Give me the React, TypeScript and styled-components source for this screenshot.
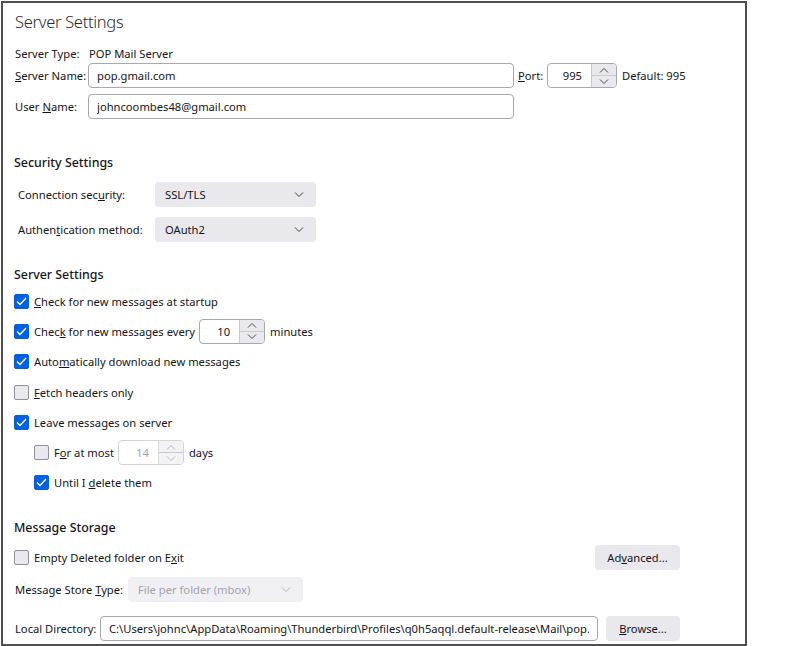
import React from "react";
import styled, { createGlobalStyle } from "styled-components";

const GlobalStyle = createGlobalStyle`
  body {
    margin: 0;
    background: #fff;
    font-family: "Noto Sans", "Open Sans", sans-serif;
    font-size: 11.2px;
    color: #15141a;
  }
`;

const Window = styled.div`
  box-sizing: border-box;
  width: 746px;
  height: 645px;
  margin: 1px 0 0 1px;
  border: 2px solid #4f4f4f;
  background: #fff;
  padding: 7px 0 0 12px;
  overflow: hidden;
`;

const Title = styled.h1`
  margin: 0;
  font-size: 16.5px;
  line-height: 24px;
  font-weight: 300;
  letter-spacing: -0.3px;
  color: #2b2a33;
`;

const Heading = styled.h2<{ $top: number }>`
  margin: ${({ $top }) => $top}px 0 0 -1px;
  font-size: 12.4px;
  line-height: 18px;
  font-weight: 500;
  color: #15141a;
`;

const Row = styled.div<{ $top?: number; $height?: number }>`
  display: flex;
  align-items: center;
  margin-top: ${({ $top = 0 }) => $top}px;
  height: ${({ $height = 25 }) => $height}px;
`;

const SplitRow = styled(Row)`
  width: 665px;
  justify-content: space-between;
`;

const Label = styled.span<{ $width?: number; $indent?: number }>`
  flex: none;
  width: ${({ $width }) => ($width ? `${$width}px` : "auto")};
  margin-left: ${({ $indent = 0 }) => $indent}px;
  white-space: nowrap;
`;

const Note = styled.span<{ $gap?: number }>`
  margin-left: ${({ $gap = 0 }) => $gap}px;
  white-space: nowrap;
`;

const TextField = styled.input<{ $width: number }>`
  box-sizing: border-box;
  width: ${({ $width }) => $width}px;
  height: 25px;
  margin: 0;
  padding: 0 8px;
  border: 1px solid #a8a8b0;
  border-radius: 4px;
  background: #fff;
  font: inherit;
  color: #15141a;
  outline: none;
`;

const Select = styled.div<{ $width: number; $disabled?: boolean }>`
  box-sizing: border-box;
  display: flex;
  align-items: center;
  justify-content: space-between;
  width: ${({ $width }) => $width}px;
  height: 25px;
  padding: 0 12px 0 10px;
  border-radius: 4px;
  background: ${({ $disabled }) => ($disabled ? "#f0f0f4" : "#e9e9ed")};
  color: ${({ $disabled }) => ($disabled ? "#a3a3a8" : "#15141a")};
`;

const Button = styled.button<{ $width: number }>`
  box-sizing: border-box;
  width: ${({ $width }) => $width}px;
  height: 25px;
  margin: 0;
  padding: 0;
  border: none;
  border-radius: 4px;
  background: #e9e9ed;
  font: inherit;
  color: #15141a;
`;

const Spin = styled.div<{ $width: number; $disabled?: boolean }>`
  box-sizing: border-box;
  display: flex;
  width: ${({ $width }) => $width}px;
  height: 25px;
  border: 1px solid ${({ $disabled }) => ($disabled ? "#d4d4d8" : "#a8a8b0")};
  border-radius: 4px;
  color: ${({ $disabled }) => ($disabled ? "#a3a3a8" : "#15141a")};
`;

const SpinValue = styled.span`
  flex: 1;
  align-self: center;
  text-align: right;
  padding-right: 9px;
`;

const SpinButtons = styled.div<{ $disabled?: boolean }>`
  display: flex;
  flex-direction: column;
  width: 24px;
  background: ${({ $disabled }) => ($disabled ? "#f3f3f5" : "#e9e9ed")};
  border-left: 1px solid ${({ $disabled }) => ($disabled ? "#dcdce0" : "#c9c9cf")};
  border-radius: 0 3px 3px 0;
`;

const SpinHalf = styled.div<{ $top?: boolean }>`
  flex: 1;
  display: flex;
  align-items: center;
  justify-content: center;
  border-top: ${({ $top }) => ($top ? "none" : "1px solid #c9c9cf")};
`;

const CheckRow = styled.label<{ $indent?: number }>`
  display: flex;
  align-items: center;
  height: 30.3px;
  padding-left: ${({ $indent = 0 }) => $indent}px;
`;

const Box = styled.span<{ $checked: boolean }>`
  box-sizing: border-box;
  flex: none;
  width: 15px;
  height: 15px;
  margin: 0 5px 0 -1px;
  display: flex;
  align-items: center;
  justify-content: center;
  border-radius: 2px;
  border: 1px solid ${({ $checked }) => ($checked ? "#0061e0" : "#8f8f9d")};
  background: ${({ $checked }) => ($checked ? "#0061e0" : "#e9e9ed")};
`;

const CheckList = styled.div`
  margin-top: 2px;
`;

const Chevron: React.FC<{ up?: boolean; color?: string }> = ({
  up = false,
  color = "#4a4a4f",
}) => (
  <svg width="10" height="6" viewBox="0 0 10 6">
    <path
      d={up ? "M1 5.5 L5 1.5 L9 5.5" : "M1 0.5 L5 4.5 L9 0.5"}
      fill="none"
      stroke={color}
      strokeWidth="1"
    />
  </svg>
);

const Check: React.FC<{ checked: boolean }> = ({ checked }) => (
  <Box $checked={checked}>
    {checked && (
      <svg width="11" height="9" viewBox="0 0 11 9">
        <path
          d="M1 4.5 L4 7.5 L10 1"
          fill="none"
          stroke="#fff"
          strokeWidth="1.3"
        />
      </svg>
    )}
  </Box>
);

const Spinner: React.FC<{ value: string; width: number; disabled?: boolean }> = ({
  value,
  width,
  disabled,
}) => {
  const c = disabled ? "#b5b5ba" : "#4a4a4f";
  return (
    <Spin $width={width} $disabled={disabled}>
      <SpinValue>{value}</SpinValue>
      <SpinButtons $disabled={disabled}>
        <SpinHalf $top>
          <Chevron up color={c} />
        </SpinHalf>
        <SpinHalf>
          <Chevron color={c} />
        </SpinHalf>
      </SpinButtons>
    </Spin>
  );
};

const Dropdown: React.FC<{ value: string; width: number; disabled?: boolean }> = ({
  value,
  width,
  disabled,
}) => (
  <Select $width={width} $disabled={disabled}>
    <span>{value}</span>
    <Chevron color={disabled ? "#b5b5ba" : "#3a3a40"} />
  </Select>
);

const CheckItem: React.FC<{
  checked: boolean;
  indent?: number;
  children: React.ReactNode;
}> = ({ checked, indent, children }) => (
  <CheckRow $indent={indent}>
    <Check checked={checked} />
    {children}
  </CheckRow>
);

export default function App() {
  return (
    <>
      <GlobalStyle />
      <Window>
        <Title>Server Settings</Title>

        <Row $top={10} $height={18}>
          <Label $width={74}>Server Type:</Label>
          <Note>POP Mail Server</Note>
        </Row>
        <Row $top={1}>
          <Label $width={73}>
            <u>S</u>erver Name:
          </Label>
          <TextField $width={426} readOnly value="pop.gmail.com" />
          <Label $width={29} $indent={4}>
            <u>P</u>ort:
          </Label>
          <Spinner value="995" width={70} />
          <Note $gap={5}>Default: 995</Note>
        </Row>
        <Row $top={6}>
          <Label $width={73}>
            User <u>N</u>ame:
          </Label>
          <TextField $width={426} readOnly value="johncoombes48@gmail.com" />
        </Row>

        <Heading $top={35}>Security Settings</Heading>
        <Row $top={10}>
          <Label $width={137} $indent={3}>
            Connection sec<u>u</u>rity:
          </Label>
          <Dropdown value="SSL/TLS" width={161} />
        </Row>
        <Row $top={10}>
          <Label $width={137} $indent={3}>
            Authen<u>t</u>ication method:
          </Label>
          <Dropdown value="OAuth2" width={161} />
        </Row>

        <Heading $top={24}>Server Settings</Heading>
        <CheckList>
          <CheckItem checked>
            <span>
              <u>C</u>heck for new messages at startup
            </span>
          </CheckItem>
          <CheckItem checked>
            <span>
              Chec<u>k</u> for new messages every
            </span>
            <Note $gap={4} />
            <Spinner value="10" width={66} />
            <Note $gap={5}>minutes</Note>
          </CheckItem>
          <CheckItem checked>
            <span>
              Auto<u>m</u>atically download new messages
            </span>
          </CheckItem>
          <CheckItem checked={false}>
            <span>
              <u>F</u>etch headers only
            </span>
          </CheckItem>
          <CheckItem checked>
            <span>
              Leave messa<u>g</u>es on server
            </span>
          </CheckItem>
          <CheckItem checked={false} indent={20}>
            <span>
              F<u>o</u>r at most
            </span>
            <Note $gap={4} />
            <Spinner value="14" width={66} disabled />
            <Note $gap={5}>days</Note>
          </CheckItem>
          <CheckItem checked indent={20}>
            <span>
              Until I <u>d</u>elete them
            </span>
          </CheckItem>
        </CheckList>

        <Heading $top={21}>Message Storage</Heading>
        <SplitRow $top={8}>
          <CheckItem checked={false}>
            <span>
              Empty Deleted folder on E<u>x</u>it
            </span>
          </CheckItem>
          <Button $width={85}>
            Ad<u>v</u>anced...
          </Button>
        </SplitRow>
        <Row $top={7}>
          <Label $width={113}>
            Message Store <u>T</u>ype:
          </Label>
          <Dropdown value="File per folder (mbox)" width={175} disabled />
        </Row>
        <Row $top={14}>
          <Label $width={85}>Local Directory:</Label>
          <TextField
            $width={498}
            readOnly
            value="C:\Users\johnc\AppData\Roaming\Thunderbird\Profiles\q0h5aqql.default-release\Mail\pop.gmail.com"
          />
          <Note $gap={8} />
          <Button $width={74}>
            <u>B</u>rowse...
          </Button>
        </Row>
      </Window>
    </>
  );
}
